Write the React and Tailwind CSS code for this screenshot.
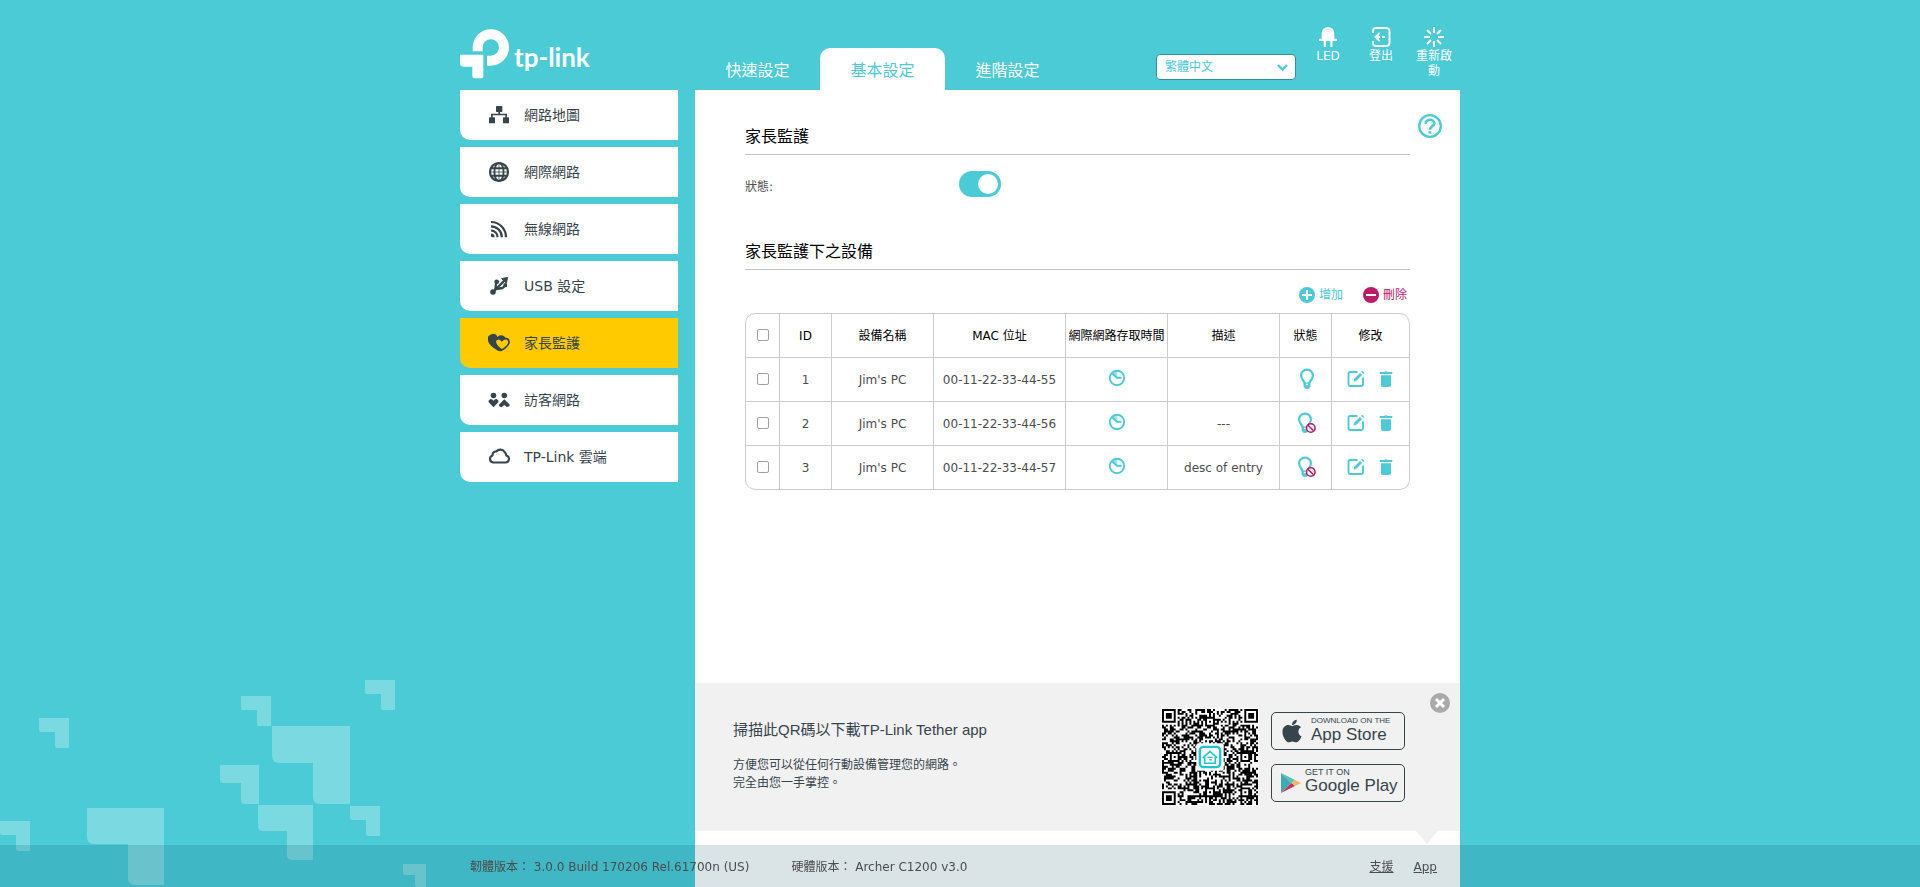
import { FaApple } from "react-icons/fa";

const MENU = [
  { label: "網路地圖", Icon: NetworkIcon },
  { label: "網際網路", Icon: GlobeIcon },
  { label: "無線網路", Icon: WirelessIcon },
  { label: "USB 設定", Icon: UsbIcon },
  { label: "家長監護", Icon: HeartsIcon, active: true },
  { label: "訪客網路", Icon: GuestIcon },
  { label: "TP-Link 雲端", Icon: CloudIcon },
];

const DEVICES = [
  { id: 1, name: "Jim's PC", mac: "00-11-22-33-44-55", desc: "", on: true },
  { id: 2, name: "Jim's PC", mac: "00-11-22-33-44-56", desc: "---", on: false },
  { id: 3, name: "Jim's PC", mac: "00-11-22-33-44-57", desc: "desc of entry", on: false },
];

// x, y, outer size, arm thickness, corner radius
const CORNERS = [
  [365, 20, 30, 14, 2],
  [241, 36, 30, 14, 2],
  [39, 58, 30, 14, 2],
  [272, 66, 78, 37, 7],
  [220, 105, 39, 18, 3],
  [258, 145, 55, 26, 5],
  [350, 146, 30, 14, 2],
  [87, 148, 77, 36, 7],
  [0, 161, 30, 14, 2],
  [403, 204, 23, 11, 2],
];

function Backdrop() {
  return (
    <svg className="pointer-events-none absolute bottom-0 left-0" width="460" height="227" viewBox="0 0 460 227" fill="#fff" fillOpacity="0.27" aria-hidden="true">
      {CORNERS.map(([x, y, s, t, r]) => (
        <path
          key={`${x}-${y}`}
          d={`M${x} ${y}h${s}v${s}h${-(t - r)}q${-r} 0 ${-r} ${-r}v${-(s - t - r)}h${-(s - t - r)}q${-r} 0 ${-r} ${-r}z`}
        />
      ))}
    </svg>
  );
}

function Logo() {
  return (
    <a href="#" className="flex items-start gap-1 pt-[29px] text-white" aria-label="tp-link">
      <svg width="50" height="50" viewBox="0 0 150 150" fill="currentColor" aria-hidden="true">
        <path d="M38 67V55A54.5 54.5 0 0 1 147 55A54.5 54.5 0 0 1 92.5 110H81V80H92.5A24.5 24.5 0 0 0 117 55A24.5 24.5 0 0 0 68 55V67Z" />
        <path d="M0 77H70V140Q70 148 62 148H45Q37 148 37 140V113H10Q0 113 0 103Z" />
      </svg>
      <span className="pt-3 font-['Lato',sans-serif] text-[26px] font-bold leading-[32px]">tp-link</span>
    </a>
  );
}

function NetworkIcon() {
  return (
    <svg width="22" height="22" viewBox="0 0 66 66" fill="currentColor" aria-hidden="true">
      <rect x="24" y="6" width="19" height="18" rx="2" />
      <rect x="3" y="40" width="18" height="18" rx="2" />
      <rect x="45" y="40" width="18" height="18" rx="2" />
      <path d="M31 22h5v7h21v12h-5v-7H14v7H9V29h22z" />
    </svg>
  );
}

function GlobeIcon() {
  return (
    <svg width="22" height="22" viewBox="0 0 22 22" fill="none" stroke="currentColor" strokeWidth="1.6" aria-hidden="true">
      <circle cx="11" cy="11" r="9" strokeWidth="2.2" />
      <ellipse cx="11" cy="11" rx="4.6" ry="9" strokeWidth="1.9" />
      <path d="M3.5 7.300h15M3.5 14.700h15" strokeWidth="1.9" />
      <path d="M11 2v18M2 11h18" strokeWidth="0.800" />
    </svg>
  );
}

function WirelessIcon() {
  return (
    <svg width="22" height="22" viewBox="0 0 22 22" fill="none" stroke="currentColor" strokeWidth="2.2" aria-hidden="true">
      <path d="M3 4A15 15 0 0 1 18 19.2M3 8.3A10.800 10.800 0 0 1 13.800 19.200M3 12.500A6.600 6.600 0 0 1 9.600 19.200" />
      <path d="M3 15.600a3.600 3.600 0 0 1 3.600 3.600H4.500q-1.500 0-1.500-1.500z" fill="currentColor" stroke="none" />
    </svg>
  );
}

function UsbIcon() {
  return (
    <svg width="22" height="22" viewBox="0 0 22 22" fill="none" stroke="currentColor" strokeWidth="2.400" strokeLinecap="round" aria-hidden="true">
      <path d="M5 17L16.500 5.500" />
      <path d="M7.500 14.500L8 8.500M9.500 13.800L14.500 13Q17 12 17.300 9.500" strokeWidth="2.400" />
      <path d="M14 3.500L19.500 2.500L18.500 8Z" fill="currentColor" strokeWidth="1" strokeLinejoin="round" />
      <circle cx="5" cy="17" r="2.800" fill="currentColor" stroke="none" />
      <circle cx="8.700" cy="6.800" r="2.400" fill="currentColor" stroke="none" />
      <path d="M15.500 8.500h3.500v3.500h-3.500z" fill="currentColor" stroke="none" />
    </svg>
  );
}

function HeartsIcon() {
  return (
    <svg width="22" height="22" viewBox="0 0 22 22" aria-hidden="true">
      <path d="M9.500 18.500C5 15.500 0 12 0 8A5 5 0 0 1 9.500 5C11.500 2.300 16 2.500 17.500 6L18 9L13.800 19Q11.500 19.600 9.500 18.500Z" fill="currentColor" />
      <path
        d="M13.700 18C10 15.500 7.200 12.500 7.200 9.600C7.200 6.700 11.500 5.400 13.800 8.600C16.300 5.200 21 6.300 21 9.900C21 13 17.500 15.800 13.700 18Z"
        className="fill-[#ffcb00]"
        stroke="currentColor"
        strokeWidth="1.700"
      />
    </svg>
  );
}

function GuestIcon() {
  return (
    <svg width="22" height="22" viewBox="0 0 22 22" fill="currentColor" aria-hidden="true">
      <circle cx="5.500" cy="6.500" r="2.800" />
      <circle cx="16.300" cy="6.500" r="2.800" />
      <path d="M2.500 10Q4.200 9.800 5.500 11.800Q6.800 9.800 8.500 10Q10.800 11 10.500 13L5.500 18.200L.5 13Q.2 11 2.500 10Z" />
      <path d="M16.300 10.300L21.800 15.700Q21.500 18 18.800 18L16.300 16L13.800 18Q11 18 10.900 15.700Z" />
    </svg>
  );
}

function CloudIcon() {
  return (
    <svg width="22" height="22" viewBox="0 0 22 22" fill="none" stroke="currentColor" strokeWidth="2.100" strokeLinejoin="round" aria-hidden="true">
      <path d="M5 16.500H17.400A3.500 3.500 0 0 0 18.300 9.600A6 6 0 0 0 16.800 6.200A5.200 5.200 0 0 0 8.300 5.500A3.300 3.300 0 0 0 4.600 9.500A3.600 3.600 0 0 0 5 16.500Z" />
    </svg>
  );
}

function LedIcon() {
  return (
    <svg width="22" height="22" viewBox="0 0 22 22" fill="currentColor" aria-hidden="true">
      <path d="M4.700 12.700V7.300a6.300 6.300 0 0 1 12.600 0V12.700H20V15H2V12.700zM6.700 15h2.200v6H6.700zM13.300 15h2.200v6H13.300z" />
    </svg>
  );
}

function LogoutIcon() {
  return (
    <svg width="22" height="22" viewBox="0 0 22 22" fill="none" stroke="currentColor" strokeWidth="2" aria-hidden="true">
      <path d="M3 7V5Q3 2 6 2H16Q19.500 2 19.500 5.500V16.500Q19.500 20 16 20H6Q3 20 3 17V15" />
      <path d="M7 11H10M12 11H15" />
      <path d="M4 11L9 6.500H10L9 9V13L10 15.500H9Z" fill="currentColor" stroke="none" />
    </svg>
  );
}

function RebootIcon() {
  return (
    <svg width="22" height="22" viewBox="0 0 22 22" fill="none" stroke="currentColor" strokeWidth="2" aria-hidden="true">
      <path d="M11 1V7M11 15V21M1 11H7M15 11H21M4 4L8 8M14 14L18 18M18 4L14 8M8 14L4 18" />
    </svg>
  );
}

function HelpIcon() {
  return (
    <svg width="24" height="24" viewBox="0 0 24 24" fill="none" stroke="currentColor" aria-hidden="true">
      <circle cx="12" cy="12" r="10.800" strokeWidth="2.300" />
      <path d="M7.700 9.800A4.300 3.900 0 0 1 16.300 9.500C16.300 12.200 12 12.200 12 15.800" strokeWidth="2.700" />
      <path d="M12 17.200V19.700" strokeWidth="2.700" />
    </svg>
  );
}

function ClockIcon() {
  return (
    <svg width="18" height="18" viewBox="0 0 18 18" fill="none" stroke="currentColor" aria-hidden="true">
      <circle cx="9" cy="9" r="7.200" strokeWidth="1.900" />
      <path d="M4.300 4.500L9 8.700H13.500" strokeWidth="2" />
      <path d="M3.800 4.500Q6 2 9.300 2V7.500Z" fill="currentColor" fillOpacity="0.500" stroke="none" />
    </svg>
  );
}

function BulbIcon({ off }) {
  return (
    <svg width="20" height="22" viewBox="0 0 20 22" fill="none" stroke="currentColor" strokeWidth="2.200" aria-hidden="true">
      <g transform={off ? "translate(-1 0)" : "translate(1 0)"}>
        <path d="M7.700 15.500C7.700 13 4.100 11.500 4.100 7.500A5.900 5.900 0 0 1 15.900 7.500C15.900 11.500 12.300 13 12.300 15.500" />
        <path d="M6.600 14.500H13.400V18.500Q12.500 21 10 21Q7.500 21 6.600 18.500Z" fill="currentColor" stroke="none" />
        <path d="M8.800 16.500h2.400" stroke="#fff" strokeWidth="1.600" />
      </g>
      {off && (
        <g stroke="#bd1a68" strokeWidth="1.600">
          <circle cx="14.800" cy="16" r="4.300" fill="#fff" />
          <path d="M12 13.200L17.600 18.800" />
        </g>
      )}
    </svg>
  );
}

function EditIcon() {
  return (
    <svg width="18" height="18" viewBox="0 0 18 18" fill="none" stroke="currentColor" aria-hidden="true">
      <path d="M10.500 2H3Q1.500 2 1.500 3.500V14.500Q1.500 16 3 16H14.500Q16 16 16 14.500V7.500" strokeWidth="1.900" />
      <path d="M8.300 9.700L14 4" strokeWidth="2.900" />
      <path d="M6.600 11.600L7.200 8.600L9.500 11Z" fill="currentColor" stroke="none" />
      <path d="M14.600 1.200L16.900 3.500" strokeWidth="1.600" />
    </svg>
  );
}

function TrashIcon() {
  return (
    <svg width="18" height="18" viewBox="0 0 18 18" fill="currentColor" aria-hidden="true">
      <path d="M2.700 2H7Q9 .6 11 2H15.300V3.900H2.700Z" />
      <path d="M4 5.200H14V15Q14 17 12 17H6Q4 17 4 15Z" />
    </svg>
  );
}

function CircleSign({ minus }) {
  return (
    <svg width="16" height="16" viewBox="0 0 16 16" aria-hidden="true">
      <circle cx="8" cy="8" r="8" fill="currentColor" />
      <path d={minus ? "M3 8H13" : "M3 8H13M8 3V13"} stroke="#fff" strokeWidth="2" />
    </svg>
  );
}

const QR_SIZE = 49;

function qrModules() {
  const cells = [];
  let seed = 90211;
  const finders = [[0, 0], [QR_SIZE - 7, 0], [0, QR_SIZE - 7]];
  const aligns = [[24, 6], [6, 24], [42, 24], [24, 42], [42, 42]];
  for (let y = 0; y < QR_SIZE; y++) {
    for (let x = 0; x < QR_SIZE; x++) {
      seed = (seed * 1103515245 + 12345) % 2147483648;
      let on = (seed >> 12) % 100 < 52;
      if (y === 6 || x === 6) on = (x + y) % 2 === 0;
      for (const [ax, ay] of aligns) {
        const d = Math.max(Math.abs(x - ax), Math.abs(y - ay));
        if (d <= 2) on = d !== 1;
      }
      for (const [fx, fy] of finders) {
        const d = Math.max(Math.abs(x - fx - 3), Math.abs(y - fy - 3));
        if (d <= 4) on = d < 2 || d === 3;
      }
      if (on) cells.push(`M${x} ${y}h1v1h-1z`);
    }
  }
  return cells.join("");
}

const QR_PATH = qrModules();

function QrCode() {
  return (
    <svg className="size-[98px] bg-white" viewBox="-0.5 -0.5 50 50" role="img" aria-label="QR">
      <path d={QR_PATH} fill="#000" />
      <rect x="17.500" y="17.500" width="14" height="14" rx="1" fill="#fff" />
      <g fill="none" stroke="#1fc4d2">
        <rect x="19.300" y="19.300" width="10.400" height="10.400" rx="2" strokeWidth="1.200" />
        <path d="M20.800 25L24.500 21.600L28.200 25M21.800 24.500V27.700H27.200V24.500" strokeWidth="0.800" />
        <path d="M23.200 24.700H25.800M24 26H25.500" strokeWidth="0.600" />
      </g>
    </svg>
  );
}

function PlayIcon() {
  return (
    <svg width="20" height="20" viewBox="0 0 20 20" aria-hidden="true">
      <path d="M0 0V20L10.500 10Z" fill="#3fa9b5" />
      <path d="M0 0L14 7L10.500 10Z" fill="#55c4a8" />
      <path d="M0 20L14 13L10.500 10Z" fill="#c8335a" />
      <path d="M14 7L20 10L14 13L10.500 10Z" fill="#f3b26a" />
    </svg>
  );
}

function Header() {
  const tab = "flex h-[42px] w-[125px] items-center justify-center pt-1 text-base";
  const tool = "flex w-10 flex-col items-center gap-px text-center text-xs leading-[15px]";
  return (
    <header className="flex h-[90px] text-white">
      <div className="w-[235px]">
        <Logo />
      </div>
      <nav className="flex items-end">
        <a href="#quick" className={tab}>快速設定</a>
        <a href="#basic" className={`${tab} rounded-t-[10px] bg-white text-[#4acbd6]`} aria-current="page">基本設定</a>
        <a href="#advanced" className={tab}>進階設定</a>
      </nav>
      <div className="relative ml-auto mt-[54px] h-[26px] w-[140px]">
        <select aria-label="語言" defaultValue="tw" className="block h-[26px] w-full appearance-none rounded-[4px] border border-[#2b949d] bg-white pl-2 text-xs text-[#4acbd6]">
          <option value="tw">繁體中文</option>
        </select>
        <svg className="pointer-events-none absolute right-2 top-[10px]" width="11" height="8" viewBox="0 0 11 8" fill="none" stroke="#4acbd6" strokeWidth="2.400" aria-hidden="true">
          <path d="M1 1L5.500 5.500L10 1" />
        </svg>
      </div>
      <div className="ml-3 flex items-start gap-[13px] pr-[6px] pt-[26px]">
        <button type="button" className={tool}><LedIcon />LED</button>
        <button type="button" className={tool}><LogoutIcon />登出</button>
        <button type="button" className={tool}><RebootIcon />重新啟動</button>
      </div>
    </header>
  );
}

function Sidebar() {
  return (
    <nav className="flex w-[218px] flex-col gap-[7px]">
      {MENU.map(({ label, Icon, active }) => (
        <a
          key={label}
          href="#"
          className={`flex h-[50px] items-center gap-[14px] rounded-bl-[10px] pl-7 text-sm text-[#36444b] ${active ? "bg-[#ffcb00]" : "bg-white"}`}
        >
          <Icon />
          {label}
        </a>
      ))}
    </nav>
  );
}

function SectionTitle({ children }) {
  return <h2 className="border-b border-[#c4c4c4] pb-[5px] pt-px text-base leading-6 text-black">{children}</h2>;
}

function Checkbox({ label }) {
  return (
    <input type="checkbox" aria-label={label} className="mx-auto mb-[2px] block size-3 appearance-none rounded-[2px] border border-[#a0a0a0] bg-white checked:bg-[#4acbd6]" />
  );
}

function DeviceTable() {
  const head = "h-11 border-b border-r border-[#ccc] p-0 font-normal whitespace-nowrap text-black";
  const cell = "h-11 border-b border-r border-[#ccc] p-0 text-center";
  return (
    <table className="mt-[10px] w-full table-fixed border-separate border-spacing-0 overflow-hidden rounded-[10px] border-l border-t border-[#ccc] text-xs text-[#4c4c4c]">
      <colgroup>
        <col className="w-[34px]" />
        <col className="w-[52px]" />
        <col className="w-[102px]" />
        <col className="w-[132px]" />
        <col className="w-[102px]" />
        <col className="w-[112px]" />
        <col className="w-[52px]" />
        <col />
      </colgroup>
      <thead>
        <tr>
          <th className={head}><Checkbox label="全選" /></th>
          <th className={head}>ID</th>
          <th className={head}>設備名稱</th>
          <th className={head}>MAC 位址</th>
          <th className={head}>網際網路存取時間</th>
          <th className={head}>描述</th>
          <th className={head}>狀態</th>
          <th className={`${head} rounded-tr-[10px]`}>修改</th>
        </tr>
      </thead>
      <tbody>
        {DEVICES.map((d, i) => {
          const last = i === DEVICES.length - 1;
          return (
            <tr key={d.id}>
              <td className={`${cell} ${last ? "rounded-bl-[10px]" : ""}`}><Checkbox label={d.mac} /></td>
              <td className={cell}>{d.id}</td>
              <td className={cell}>{d.name}</td>
              <td className={cell}>{d.mac}</td>
              <td className={cell}>
                <button type="button" aria-label="存取時間" className="mx-auto block pb-1 text-[#4acbd6]"><ClockIcon /></button>
              </td>
              <td className={cell}>{d.desc}</td>
              <td className={cell}>
                <button type="button" aria-label="狀態" className="mx-auto block pb-[2px] text-[#4acbd6]"><BulbIcon off={!d.on} /></button>
              </td>
              <td className={`${cell} ${last ? "rounded-br-[10px]" : ""}`}>
                <span className="flex justify-center gap-3 pb-[2px] text-[#4acbd6]">
                  <button type="button" aria-label="修改"><EditIcon /></button>
                  <button type="button" aria-label="刪除"><TrashIcon /></button>
                </span>
              </td>
            </tr>
          );
        })}
      </tbody>
    </table>
  );
}

function Promo() {
  const badge = "flex h-[38px] w-[134px] items-center rounded-[5px] border border-[#36444b] pl-[9px] font-['Liberation_Sans',sans-serif] text-[#36444b]";
  return (
    <aside className="relative mb-14 mt-auto flex h-[148px] items-center bg-[#f1f1f1] pl-[38px] pr-[55px] text-[#36444b]">
      <div className="flex-1 pb-1 font-['Liberation_Sans','Noto_Sans_CJK_TC',sans-serif]">
        <p className="text-[15px] leading-6">掃描此QR碼以下載TP-Link Tether app</p>
        <p className="mt-[14px] text-xs leading-[18px]">
          方便您可以從任何行動設備管理您的網路。
          <br />
          完全由您一手掌控。
        </p>
      </div>
      <QrCode />
      <div className="ml-3 flex flex-col gap-[14px]">
        <a href="#appstore" className={`${badge} gap-2`}>
          <FaApple className="h-[26px] w-[22px]" aria-hidden="true" />
          <span className="flex flex-col">
            <span className="whitespace-nowrap text-[8px] leading-[8px]">DOWNLOAD ON THE</span>
            <span className="text-[17px] leading-5">App Store</span>
          </span>
        </a>
        <a href="#googleplay" className={`${badge} gap-1`}>
          <PlayIcon />
          <span className="flex flex-col pb-[2px]">
            <span className="whitespace-nowrap text-[9px] leading-[8px]">GET IT ON</span>
            <span className="whitespace-nowrap text-[17px] leading-5">Google Play</span>
          </span>
        </a>
      </div>
      <button type="button" aria-label="關閉" className="absolute right-[10px] top-[10px]">
        <svg width="20" height="20" viewBox="0 0 20 20" aria-hidden="true">
          <circle cx="10" cy="10" r="10" fill="#a9a9ab" />
          <path d="M6 6L14 14M14 6L6 14" stroke="#fff" strokeWidth="3" />
        </svg>
      </button>
      <svg className="absolute right-[22px] top-full" width="22" height="13" viewBox="0 0 22 13" aria-hidden="true">
        <path d="M0 0H22L11 13Z" fill="#f1f1f1" />
      </svg>
    </aside>
  );
}

export default function App() {
  return (
    <div className="relative flex min-h-screen flex-col bg-[#4acbd6] font-['DejaVu_Sans','Noto_Sans_CJK_TC',sans-serif]">
      <Backdrop />
      <div className="relative mx-auto flex w-full max-w-[1000px] flex-1 flex-col">
        <Header />
        <div className="flex flex-1 gap-[17px]">
          <Sidebar />
          <main className="relative flex flex-1 flex-col bg-white">
            <button type="button" aria-label="說明" className="absolute right-[18px] top-[24px] text-[#4acbd6]"><HelpIcon /></button>
            <div className="px-[50px] pb-8 pt-[34px]">
              <SectionTitle>家長監護</SectionTitle>
              <div className="mt-4 flex items-start text-xs text-[#4c4c4c]">
                <label htmlFor="status" className="w-[214px] pt-[6px] leading-5">狀態:</label>
                <input
                  id="status"
                  type="checkbox"
                  role="switch"
                  defaultChecked
                  className="h-[26px] w-[42px] appearance-none rounded-full bg-[#bbb] p-[3px] before:block before:size-5 before:rounded-full before:bg-white checked:bg-[#4acbd6] checked:before:ml-4"
                />
              </div>
              <div className="mt-[42px]">
                <SectionTitle>家長監護下之設備</SectionTitle>
              </div>
              <div className="mt-[17px] flex justify-end gap-5 pr-[3px] text-xs leading-4">
                <button type="button" className="flex gap-1 text-[#4acbd6]"><CircleSign />增加</button>
                <button type="button" className="flex gap-1 text-[#bd1a68]"><CircleSign minus />刪除</button>
              </div>
              <DeviceTable />
            </div>
            <Promo />
          </main>
        </div>
      </div>
      <footer className="fixed inset-x-0 bottom-0 bg-[#004358]/[0.145] text-xs text-[#4c4c4c]">
        <div className="mx-auto flex h-[42px] max-w-[1000px] items-center pl-[10px] pr-[23px] pt-[2px]">
          <span>韌體版本： 3.0.0 Build 170206 Rel.61700n (US)</span>
          <span className="ml-[42px]">硬體版本： Archer C1200 v3.0</span>
          <a href="#support" className="ml-auto underline">支援</a>
          <a href="#app" className="ml-5 underline">App</a>
        </div>
      </footer>
    </div>
  );
}
